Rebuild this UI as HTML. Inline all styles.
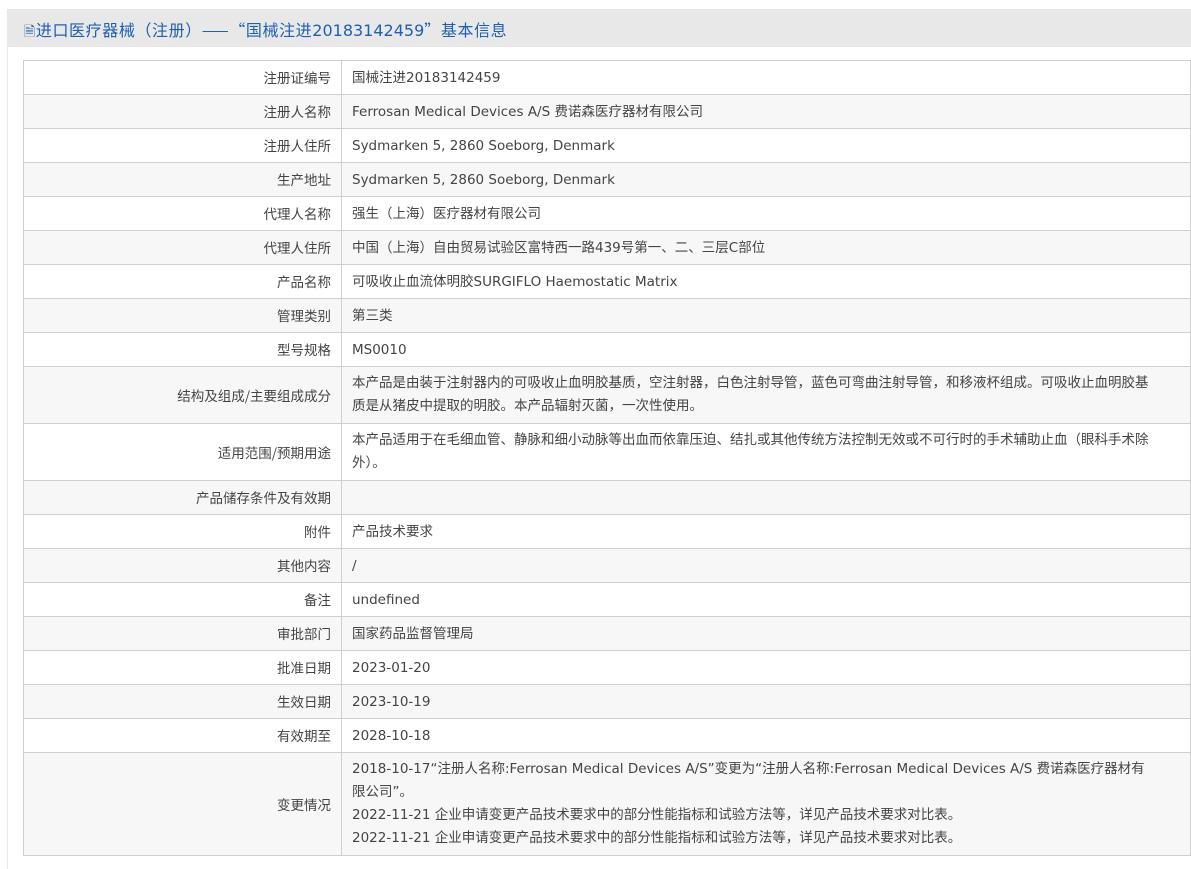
<!DOCTYPE html>
<html><head><meta charset="utf-8"><style>
body{margin:0;background:#fff;font-family:"DejaVu Sans","Noto Sans CJK SC",sans-serif;width:1191px;height:856px;overflow:hidden;}
.panel{position:absolute;left:7px;top:9px;width:1184px;height:860px;border-left:1px solid #e8e8e8;}
.hd{height:38px;background:#e8e8e8;color:#1f5fb0;font-size:16px;line-height:40px;padding-left:16px;font-family:"Noto Sans CJK SC",sans-serif;letter-spacing:0.6px;}
.hd .n{font-family:"DejaVu Sans",sans-serif;letter-spacing:0;}
table{position:absolute;left:15px;top:51px;width:1168px;border-collapse:collapse;font-size:13.5px;color:#444;}
td{border:1px solid #cfcfcf;height:34px;padding:2px 10px 0;line-height:23px;box-sizing:border-box;}
td.l{width:318px;text-align:right;font-family:"Noto Sans CJK SC",sans-serif;padding-top:0;}
tr:nth-child(even) td{background:#f7f7f7;}
td.t{padding-top:5px;padding-bottom:5px;}
</style></head><body>
<div class="panel"><div class="hd"><span style="font-size:14px">🗎</span>进口医疗器械（注册）——“国械注进<span class="n">20183142459</span>”基本信息</div>
<table>
<tr><td class="l">注册证编号</td><td>国械注进20183142459</td></tr>
<tr><td class="l">注册人名称</td><td>Ferrosan Medical Devices A/S 费诺森医疗器材有限公司</td></tr>
<tr><td class="l">注册人住所</td><td>Sydmarken 5, 2860 Soeborg, Denmark</td></tr>
<tr><td class="l">生产地址</td><td>Sydmarken 5, 2860 Soeborg, Denmark</td></tr>
<tr><td class="l">代理人名称</td><td>强生（上海）医疗器材有限公司</td></tr>
<tr><td class="l">代理人住所</td><td>中国（上海）自由贸易试验区富特西一路439号第一、二、三层C部位</td></tr>
<tr><td class="l">产品名称</td><td>可吸收止血流体明胶SURGIFLO Haemostatic Matrix</td></tr>
<tr><td class="l">管理类别</td><td>第三类</td></tr>
<tr><td class="l">型号规格</td><td>MS0010</td></tr>
<tr><td class="l">结构及组成/主要组成成分</td><td class="t" style="height:57px">本产品是由装于注射器内的可吸收止血明胶基质，空注射器，白色注射导管，蓝色可弯曲注射导管，和移液杯组成。可吸收止血明胶基<br>质是从猪皮中提取的明胶。本产品辐射灭菌，一次性使用。</td></tr>
<tr><td class="l">适用范围/预期用途</td><td class="t" style="height:57px">本产品适用于在毛细血管、静脉和细小动脉等出血而依靠压迫、结扎或其他传统方法控制无效或不可行时的手术辅助止血（眼科手术除<br>外）。</td></tr>
<tr><td class="l">产品储存条件及有效期</td><td></td></tr>
<tr><td class="l">附件</td><td>产品技术要求</td></tr>
<tr><td class="l">其他内容</td><td>/</td></tr>
<tr><td class="l">备注</td><td>undefined</td></tr>
<tr><td class="l">审批部门</td><td>国家药品监督管理局</td></tr>
<tr><td class="l">批准日期</td><td>2023-01-20</td></tr>
<tr><td class="l">生效日期</td><td>2023-10-19</td></tr>
<tr><td class="l">有效期至</td><td>2028-10-18</td></tr>
<tr><td class="l">变更情况</td><td class="t">2018-10-17“注册人名称:Ferrosan Medical Devices A/S”变更为“注册人名称:Ferrosan Medical Devices A/S 费诺森医疗器材有<br>限公司”。<br>2022-11-21 企业申请变更产品技术要求中的部分性能指标和试验方法等，详见产品技术要求对比表。<br>2022-11-21 企业申请变更产品技术要求中的部分性能指标和试验方法等，详见产品技术要求对比表。</td></tr>
</table></div>
</body></html>
